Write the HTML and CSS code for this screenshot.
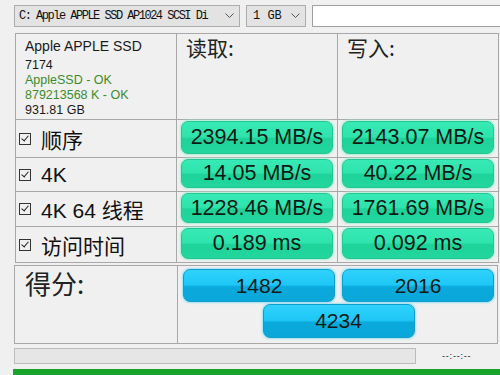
FILE: index.html
```html
<!DOCTYPE html>
<html lang="zh">
  <head>
    <meta charset="UTF-8" />
    <title>AS SSD Benchmark</title>
    <link rel="stylesheet" href="styles.css">
  </head>
  <body>
    <div class="app">
      <div class="toolbar">
        <div class="combo drive">
          <span>C: Apple APPLE SSD AP1024 SCSI Di</span>
          <svg class="chev" width="9" height="6" viewBox="0 0 9 6"><path d="M0.5 0.5 L4.5 4.5 L8.5 0.5" fill="none" stroke="#555" stroke-width="1"/></svg>
        </div>
        <div class="combo size">
          <span>1 GB</span>
          <svg class="chev" width="9" height="6" viewBox="0 0 9 6"><path d="M0.5 0.5 L4.5 4.5 L8.5 0.5" fill="none" stroke="#555" stroke-width="1"/></svg>
        </div>
        <div class="field"></div>
      </div>

      <div class="bench">
        <div class="info">
          <div class="model">Apple APPLE SSD</div>
          <div>7174</div>
          <div class="ok">AppleSSD - OK</div>
          <div class="ok">879213568 K - OK</div>
          <div>931.81 GB</div>
        </div>
        <div class="head">读取:</div>
        <div class="head">写入:</div>

        <div class="label"><span class="check"></span>顺序</div>
        <div class="cell"><div class="pill green">2394.15 MB/s</div></div>
        <div class="cell"><div class="pill green">2143.07 MB/s</div></div>

        <div class="label"><span class="check"></span>4K</div>
        <div class="cell"><div class="pill green">14.05 MB/s</div></div>
        <div class="cell"><div class="pill green">40.22 MB/s</div></div>

        <div class="label"><span class="check"></span>4K 64 线程</div>
        <div class="cell"><div class="pill green">1228.46 MB/s</div></div>
        <div class="cell"><div class="pill green">1761.69 MB/s</div></div>

        <div class="label"><span class="check"></span>访问时间</div>
        <div class="cell"><div class="pill green">0.189 ms</div></div>
        <div class="cell"><div class="pill green">0.092 ms</div></div>
      </div>

      <div class="score">
        <div class="score-label">得分:</div>
        <div class="score-vals">
          <div class="pill blue">1482</div>
          <div class="pill blue">2016</div>
          <div class="pill blue total">4234</div>
        </div>
      </div>

      <div class="status">
        <div class="progress"></div>
        <span class="time">--:--:--</span>
      </div>
      <div class="green-bar"></div>
    </div>
  </body>
</html>
```

FILE: styles.css
```css
body {
  margin: 0;
  background: #f0f0f0;
  font-family: "Liberation Sans", "Noto Sans CJK SC", sans-serif;
  color: #1a1a1a;
  overflow: hidden;
}
.app {
  padding: 5px 0 0 14px;
}
.toolbar {
  display: flex;
  gap: 6px;
  height: 22px;
  margin-bottom: 6px;
}
.combo {
  display: flex;
  align-items: center;
  justify-content: space-between;
  box-sizing: border-box;
  height: 22px;
  padding: 0 5px 0 4px;
  background: #e3e3e3;
  border: 1px solid #adadad;
  font-family: "Liberation Mono", monospace;
  font-size: 12px;
  letter-spacing: -1.5px;
  color: #111;
}
.drive {
  width: 226px;
}
.size {
  width: 60px;
  padding-left: 6px;
  letter-spacing: 0;
}
.chev {
  flex: none;
}
.field {
  flex: 1;
  height: 22px;
  box-sizing: border-box;
  background: #fff;
  border: 1px solid #a0a0a0;
  border-right: none;
}
.bench {
  display: grid;
  grid-template-columns: 160px 160px 160px;
  grid-template-rows: 85px 37px 33px 34px 35px;
  gap: 1px;
  padding: 1px;
  width: 484px;
  box-sizing: border-box;
  margin-left: 1px;
  background: #a8a8a8;
}
.bench > div {
  background: #f0f0f0;
}
.info {
  padding: 2px 0 0 9px;
  font-size: 12.5px;
  line-height: 15px;
}
.model {
  font-size: 14px;
  line-height: 20px;
  margin-bottom: 2px;
}
.ok {
  color: #3c8b2c;
}
.head {
  padding: 1px 0 0 9px;
  font-family: "Noto Sans CJK SC", sans-serif;
  font-size: 21px;
  line-height: 24px;
  color: #222;
}
.label {
  display: flex;
  align-items: center;
  padding-left: 3px;
  font-size: 21px;
  color: #111;
}
.check {
  position: relative;
  width: 12px;
  height: 12px;
  box-sizing: border-box;
  border: 1px solid #333;
  margin-right: 10px;
}
.check::after {
  content: "";
  position: absolute;
  left: 3px;
  top: 0px;
  width: 3px;
  height: 6px;
  border: solid #222;
  border-width: 0 1.5px 1.5px 0;
  transform: rotate(40deg);
}
.cell {
  padding: 1px 4px 3px 4px;
  display: flex;
}
.pill {
  flex: 1;
  display: flex;
  align-items: center;
  justify-content: center;
  box-sizing: border-box;
  border-radius: 7px;
  font-size: 21.5px;
  color: #0c1a14;
}
.green {
  background: linear-gradient(#38eab6 0%, #2ee3ac 48%, #1ed399 54%, #22d69d 100%);
  border: 1px solid #22c792;
  box-shadow: 0 0 2px 1px #a6efd4;
}
.blue {
  background: linear-gradient(#2fd2fb 0%, #1ec7f6 48%, #0aaadd 54%, #0ba7d9 100%);
  border: 1px solid #0c9fd0;
  box-shadow: 0 0 2px 1px #9fdff3;
  font-size: 21px;
}
.score {
  display: grid;
  grid-template-columns: 162px 319px;
  gap: 1px;
  padding: 1px;
  width: 484px;
  height: 79px;
  box-sizing: border-box;
  margin-top: 2px;
  background: #a8a8a8;
}
.score > div {
  background: #f0f0f0;
}
.score-label {
  padding: 2px 0 0 10px;
  font-family: "Noto Sans CJK SC", sans-serif;
  font-size: 26px;
  line-height: 30px;
  color: #222;
}
.score-vals {
  display: grid;
  grid-template-columns: 152px 152px;
  grid-template-rows: 33px 34px;
  column-gap: 7px;
  row-gap: 2px;
  padding: 3px 0 0 5px;
}
.total {
  grid-column: 1 / span 2;
  justify-self: center;
  width: 152px;
}
.status {
  display: flex;
  align-items: center;
  margin-top: 4px;
  height: 16px;
}
.progress {
  width: 402px;
  height: 16px;
  box-sizing: border-box;
  background: #e6e6e6;
  border: 1px solid #bcbcbc;
}
.time {
  margin-left: 26px;
  font-size: 9px;
  letter-spacing: 0.8px;
  color: #222;
}
.green-bar {
  height: 6px;
  margin: 5px 0 0 -1px;
  background: #19a52c;
}
```
